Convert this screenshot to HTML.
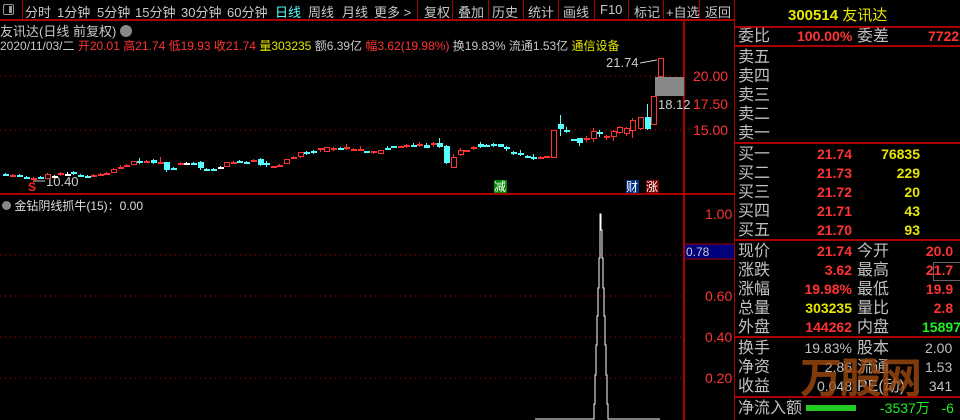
<!DOCTYPE html>
<html><head><meta charset="utf-8"><style>
*{margin:0;padding:0;box-sizing:border-box}
body{width:960px;height:420px;background:#000;overflow:hidden;position:relative;font-family:"Liberation Sans","Noto Sans CJK SC",sans-serif;color:#c0c0c0}
.a{position:absolute;white-space:nowrap}
.tb{font-size:13px;top:2px;color:#c8c8c8}
.sep{position:absolute;top:0;width:1px;height:19px;background:#a00}
.r{color:#ff3333}.y{color:#e6e600}.c{color:#55ffff}.g{color:#22ee22}.w{color:#c8c8c8}
.rp{font-size:16px;line-height:19px}
.hl{position:absolute;height:2px;background:#a00}
svg line,svg rect,svg polyline{shape-rendering:crispEdges}
</style></head><body>
<div class="a" style="left:3px;top:4px;width:11px;height:11px;border:1px solid #999;border-radius:2px"><div style="position:absolute;right:1px;top:1px;width:3px;height:7px;background:#999"></div></div>
<div class="sep" style="left:22px"></div>
<div class="a tb" style="left:25px">分时</div>
<div class="a tb" style="left:57px">1分钟</div>
<div class="a tb" style="left:97px">5分钟</div>
<div class="a tb" style="left:135px">15分钟</div>
<div class="a tb" style="left:181px">30分钟</div>
<div class="a tb" style="left:227px">60分钟</div>
<div class="a tb c" style="left:275px">日线</div>
<div class="a tb" style="left:308px">周线</div>
<div class="a tb" style="left:342px">月线</div>
<div class="a tb" style="left:374px">更多 &gt;</div>
<div class="sep" style="left:417px"></div>
<div class="a tb" style="left:424px">复权</div>
<div class="sep" style="left:452px"></div>
<div class="a tb" style="left:458px">叠加</div>
<div class="sep" style="left:488px"></div>
<div class="a tb" style="left:492px">历史</div>
<div class="sep" style="left:523px"></div>
<div class="a tb" style="left:528px">统计</div>
<div class="sep" style="left:558px"></div>
<div class="a tb" style="left:563px">画线</div>
<div class="sep" style="left:594px"></div>
<div class="a tb" style="left:600px">F10</div>
<div class="sep" style="left:628px"></div>
<div class="a tb" style="left:634px">标记</div>
<div class="sep" style="left:663px"></div>
<div class="a tb" style="left:666px">+自选</div>
<div class="sep" style="left:699px"></div>
<div class="a tb" style="left:705px">返回</div>
<div class="sep" style="left:734px;height:420px"></div>
<div class="hl" style="left:0;top:19px;width:735px"></div>

<div class="a" style="left:0;top:21px;font-size:13px;color:#c8c8c8">友讯达(日线 前复权) <span style="display:inline-block;width:12px;height:12px;border-radius:6px;background:#888;vertical-align:-1px"></span></div>
<div class="a" style="left:0;top:37px;font-size:12px;color:#c8c8c8">2020/11/03/二 <span class="r">开20.01 高21.74 低19.93 收21.74</span> <span class="y">量303235</span> 额6.39亿 <span class="r">幅3.62(19.98%)</span> 换19.83% 流通1.53亿 <span class="y">通信设备</span></div>

<svg class="a" style="left:0;top:0" width="735" height="420" id="sv">
<line x1="0" y1="76" x2="684" y2="76" stroke="#c00" stroke-dasharray="1,4"/>
<line x1="0" y1="130" x2="684" y2="130" stroke="#c00" stroke-dasharray="1,4"/>
<line x1="0" y1="255" x2="684" y2="255" stroke="#c00" stroke-dasharray="1,4"/>
<line x1="0" y1="296" x2="684" y2="296" stroke="#c00" stroke-dasharray="1,4"/>
<line x1="0" y1="337" x2="684" y2="337" stroke="#c00" stroke-dasharray="1,4"/>
<line x1="0" y1="378" x2="684" y2="378" stroke="#c00" stroke-dasharray="1,4"/>
<line x1="0" y1="194" x2="735" y2="194" stroke="#a00" stroke-width="2"/>
<line x1="684" y1="20" x2="684" y2="420" stroke="#a00" stroke-width="2"/>
<rect x="655" y="77" width="29" height="19" fill="#888"/>
<rect x="685" y="244" width="49" height="15" fill="#00007a"/>
<line x1="685" y1="244" x2="734" y2="244" stroke="#a00"/><line x1="685" y1="259" x2="734" y2="259" stroke="#a00"/>
<polyline points="535,419 594,419 594,404 595,404 595,375 596,375 596,345 597,345 597,316 598,316 598,288 599,288 599,258 600,258 600,230 600,214 601,214 601,230 602,230 602,258 603,258 603,288 604,288 604,316 605,316 605,345 606,345 606,375 607,375 607,404 608,404 608,419 660,419" fill="none" stroke="#fff" stroke-width="1"/>
<g font-size="14" fill="#ff3333" font-family="Liberation Sans">
<text x="693" y="81">20.00</text><text x="693" y="109">17.50</text><text x="693" y="135">15.00</text>
<text x="705" y="219">1.00</text><text x="705" y="301">0.60</text><text x="705" y="342">0.40</text><text x="705" y="383">0.20</text>
</g>
<text x="686" y="256" font-size="12" fill="#ccc">0.78</text>
<text x="658" y="109" font-size="13" fill="#ccc">18.12</text>
<text x="606" y="67" font-size="13" fill="#ccc">21.74</text>
<line x1="640" y1="63" x2="657" y2="60" stroke="#ccc"/>
<text x="46" y="186" font-size="13" fill="#ccc">10.40</text>
<line x1="33" y1="181" x2="45" y2="181" stroke="#ccc"/>
<text x="28" y="191" font-size="12" fill="#f22" font-weight="bold">S</text>
<rect x="494" y="180" width="13" height="13" fill="#080"/><text x="494" y="191" font-size="12" fill="#fff">减</text>
<rect x="626" y="180" width="13" height="13" fill="#003080"/><text x="626" y="191" font-size="12" fill="#fff">财</text>
<rect x="646" y="180" width="13" height="13" fill="#700"/><text x="646" y="191" font-size="12" fill="#fff">涨</text>
<g id="cd"></g>
</svg>
<div class="a" style="left:2px;top:197px;font-size:12px;color:#ddd"><span style="display:inline-block;width:9px;height:9px;border-radius:5px;background:#888"></span> 金钻阴线抓牛(15)：0.00</div>

<div class="a y" style="left:788px;top:4px;font-size:15px;font-weight:bold">300514 <span style="font-weight:normal">友讯达</span></div>
<div class="hl" style="left:735px;top:26px;width:225px"></div>
<div class="a rp" style="left:738px;top:27px">委比</div>
<div class="a rp r" style="left:797px;top:27px;font-size:14px;font-weight:bold">100.00%</div>
<div class="a rp" style="left:857px;top:27px">委差</div>
<div class="a rp r" style="left:928px;top:27px;font-size:14px;font-weight:bold">7722</div>
<div class="hl" style="left:735px;top:45px;width:225px"></div>
<div class="a rp" style="left:738px;top:48px;line-height:19px">卖五<br>卖四<br>卖三<br>卖二<br>卖一</div>
<div class="hl" style="left:735px;top:142px;width:225px"></div>
<div class="a rp" style="left:738px;top:145px">买一<br>买二<br>买三<br>买四<br>买五</div>
<div class="a rp r" style="left:812px;top:145px;font-size:14px;text-align:right;width:40px;font-weight:bold">21.74<br>21.73<br>21.72<br>21.71<br>21.70</div>
<div class="a rp y" style="left:860px;top:145px;font-size:14px;text-align:right;width:60px;font-weight:bold">76835<br>229<br>20<br>43<br>93</div>
<div class="hl" style="left:735px;top:239px;width:225px"></div>
<div class="a rp" style="left:738px;top:242px">现价<br>涨跌<br>涨幅<br>总量<br>外盘</div>
<div class="a rp" style="left:796px;top:242px;font-size:14px;text-align:right;width:56px;font-weight:bold"><span class="r">21.74</span><br><span class="r">3.62</span><br><span class="r">19.98%</span><br><span class="y">303235</span><br><span class="r">144262</span></div>
<div class="a rp" style="left:857px;top:242px">今开<br>最高<br>最低<br>量比<br>内盘</div>
<div class="a rp" style="left:922px;top:242px;font-size:14px;font-weight:bold"><span class="r">&nbsp;20.0</span><br><span class="r">&nbsp;21.7</span><br><span class="r">&nbsp;19.9</span><br><span class="r">&nbsp;&nbsp;&nbsp;2.8</span><br><span class="g">15897</span></div>
<div class="a" style="left:933px;top:262px;width:30px;height:19px;border:1px solid #666"></div>
<div class="hl" style="left:735px;top:336px;width:225px"></div>
<div class="a rp" style="left:738px;top:339px">换手<br>净资<br>收益</div>
<div class="a rp" style="left:796px;top:339px;font-size:14px;text-align:right;width:56px">19.83%<br>2.86<br>0.048</div>
<div class="a rp" style="left:857px;top:339px">股本<br>流通<br>PE(动)</div>
<div class="a rp" style="left:925px;top:339px;font-size:14px">2.00<br>1.53<br>&nbsp;341</div>
<div class="a" style="left:800px;top:345px;font-size:42px;font-weight:bold;color:#a04a10;opacity:.8;letter-spacing:-2px">万股网</div>
<div class="hl" style="left:735px;top:396px;width:225px"></div>
<div class="a rp" style="left:738px;top:399px">净流入额</div>
<div class="a" style="left:806px;top:405px;width:50px;height:6px;background:#2c2"></div>
<div class="a rp g" style="left:880px;top:399px;font-size:14px">-3537万 &nbsp;&nbsp;-6</div>
<script>
var d=[[5,174,175,173,176,'c'],[12,176,175,174,177,'r'],[19,176,175,174,177,'c'],[26,178,177,176,179,'c'],[33,180,178,177,181,'r'],[40,178,177,176,179,'c'],[47,178,174,173,179,'r'],[54,177,176,175,178,'w'],[60,175,173,172,176,'r'],[67,175,174,172,176,'w'],[73,174,172,171,175,'c'],[80,176,175,174,176,'c'],[87,177,176,175,177,'c'],[93,176,175,174,177,'r'],[100,175,174,173,175,'r'],[106,175,173,172,175,'r'],[113,172,169,168,172,'r'],[120,168,167,165,168,'r'],[126,167,165,164,167,'r'],[133,164,161,161,165,'r'],[139,163,161,158,164,'c'],[146,163,161,160,163,'r'],[153,163,160,159,164,'c'],[160,163,162,157,163,'r'],[166,162,170,162,172,'c'],[173,168,169,167,169,'c'],[180,164,163,162,165,'r'],[186,163,163,162,164,'w'],[193,164,163,162,164,'c'],[200,162,168,161,170,'c'],[206,169,169,168,171,'c'],[213,169,169,168,170,'c'],[220,167,167,166,168,'w'],[226,166,162,162,167,'r'],[233,163,162,161,164,'r'],[239,161,162,160,162,'c'],[246,162,162,161,163,'c'],[253,161,160,159,161,'r'],[260,159,165,158,166,'c'],[266,164,163,161,167,'c'],[273,167,166,166,167,'r'],[279,166,165,164,166,'r'],[286,163,159,159,164,'r'],[293,158,157,156,158,'r'],[300,156,152,152,158,'r'],[306,154,152,151,155,'c'],[313,152,151,150,154,'c'],[320,150,148,148,152,'r'],[326,151,147,147,151,'r'],[333,150,148,147,151,'r'],[340,149,148,147,150,'c'],[346,147,149,144,150,'r'],[353,150,149,148,150,'r'],[360,149,150,146,151,'r'],[366,152,151,151,153,'c'],[373,153,151,151,154,'r'],[380,153,150,150,153,'r'],[387,148,148,146,149,'c'],[393,148,146,146,148,'c'],[400,148,146,146,148,'r'],[406,147,145,144,148,'r'],[413,145,145,143,146,'c'],[419,144,146,142,147,'r'],[426,145,148,143,148,'c'],[433,145,143,142,147,'r'],[439,143,147,138,148,'c'],[446,146,163,145,164,'c'],[453,157,167,154,167,'r'],[460,154,150,148,156,'r'],[466,150,150,150,152,'r'],[473,149,147,146,150,'r'],[480,144,147,142,148,'c'],[486,145,146,144,147,'c'],[493,144,146,143,147,'c'],[500,147,144,144,147,'c'],[506,149,147,146,151,'c'],[513,152,153,151,155,'c'],[520,153,155,150,156,'c'],[527,157,156,155,157,'c'],[533,157,159,154,160,'c'],[540,158,157,156,159,'r'],[546,157,156,156,158,'r'],[553,157,130,130,157,'r'],[560,124,129,115,136,'c'],[566,130,131,127,133,'c'],[573,139,140,139,141,'c'],[579,138,143,138,146,'c'],[586,140,138,136,142,'r'],[593,138,131,128,142,'r'],[599,132,134,130,137,'c'],[606,138,136,135,140,'r'],[613,136,131,130,141,'r'],[619,132,127,126,134,'r'],[626,133,128,127,136,'r'],[632,130,120,118,138,'r'],[640,128,117,117,130,'r'],[647,117,129,104,130,'c'],[653,124,96,96,124,'r'],[660,76,58,58,76,'r']];
var s='',col={r:'#ff3333',c:'#55ffff',w:'#ffffff'};
d.forEach(function(k){var x=k[0],o=k[1],c=k[2],h=k[3],l=k[4],t=col[k[5]];var top=Math.min(o,c),bh=Math.max(2,Math.abs(c-o));
s+='<line x1="'+(x+.5)+'" y1="'+h+'" x2="'+(x+.5)+'" y2="'+l+'" stroke="'+t+'"/>';
if(k[5]=='r'&&bh>2)s+='<rect x="'+(x-2)+'.5" y="'+top+'.5" width="5" height="'+bh+'" fill="#000" stroke="'+t+'"/>';
else s+='<rect x="'+(x-2)+'" y="'+top+'" width="6" height="'+bh+'" fill="'+t+'"/>';});
document.getElementById('cd').innerHTML=s;
</script>
</body></html>
